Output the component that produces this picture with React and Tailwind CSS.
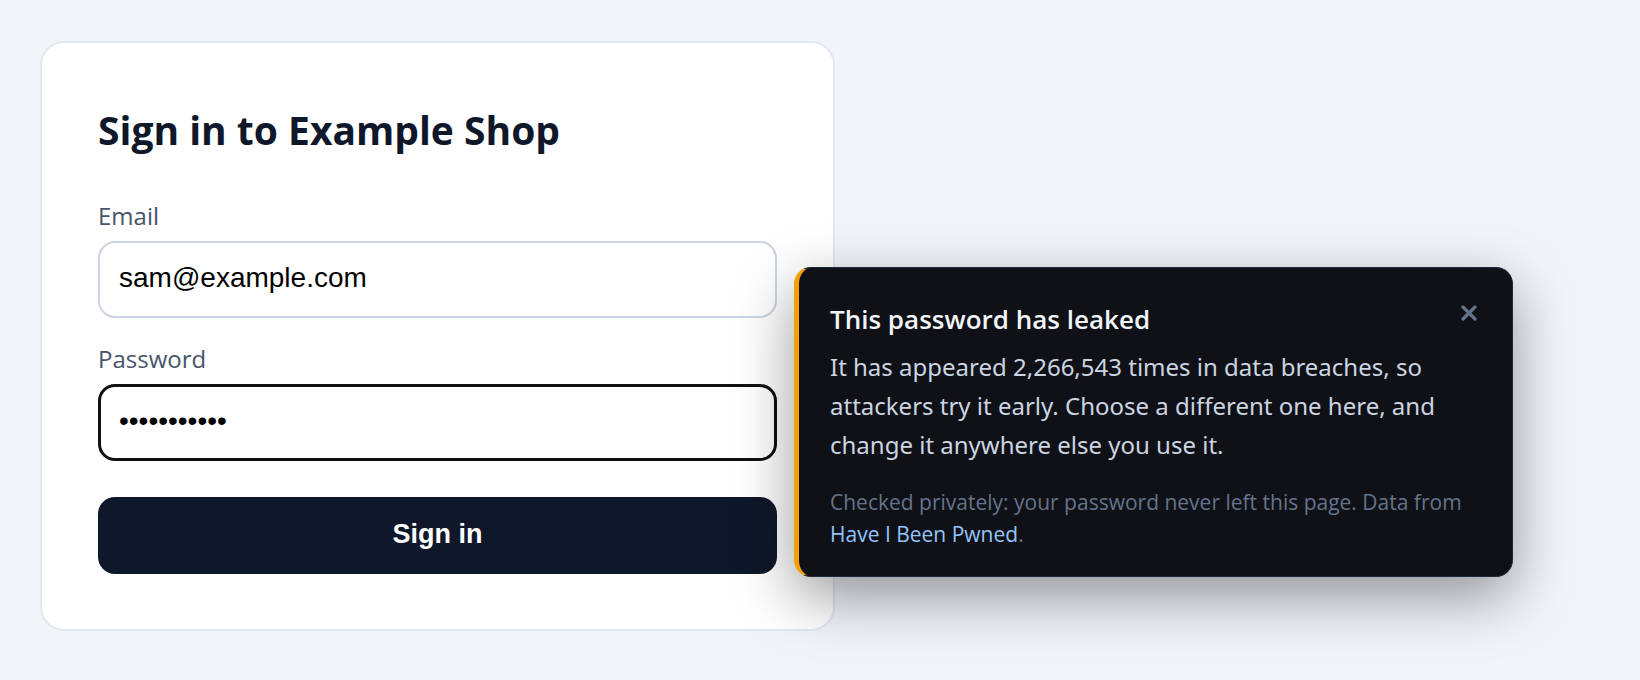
import React, { useState } from 'react';

// ── LeakNotice ────────────────────────────────────────────────────────────────

/**
 * Dark popover that sits beside the password field and warns that the
 * password shows up in known breaches.
 */
function LeakNotice({ count, onDismiss }) {
  return (
    <div
      role="alert"
      className="absolute left-full -top-[117px] ml-[17px] w-[719px] rounded-[17px] border border-l-5 border-[#1e293b] border-l-[#f59e0b] bg-[#0f1117] pl-[31px] pr-8 pt-8 pb-[26px] shadow-[0_20px_60px_rgba(0,0,0,0.4)]"
    >
      <div className="flex items-start justify-between">
        <h2 className="text-[26px] leading-[38px] font-semibold text-[#f1f5f9]">
          This password has leaked
        </h2>
        <button
          type="button"
          aria-label="Dismiss"
          onClick={onDismiss}
          className="flex h-[26px] w-[22px] items-center justify-center text-[#64748b]"
        >
          <svg viewBox="0 0 16 16" className="size-4" fill="none" stroke="currentColor" strokeWidth="3.2" strokeLinecap="round" aria-hidden="true">
            <path d="M2 2l12 12M14 2L2 14" />
          </svg>
        </button>
      </div>

      <p className="mt-[9px] font-['Noto_Sans',sans-serif] text-[24px] leading-[39px] text-[#cbd5e1]">
        {`It has appeared ${count.toLocaleString('en-US')} times in data breaches, so attackers try it early. Choose a different one here, and change it anywhere else you use it.`}
      </p>

      <p className="mt-[22px] text-[21px] leading-8 text-[#64748b]">
        Checked privately: your password never left this page. Data from{' '}
        <a href="#hibp" className="text-[#93c5fd]">Have I Been Pwned</a>.
      </p>
    </div>
  );
}

// ── App ───────────────────────────────────────────────────────────────────────

export default function App() {
  const [email, setEmail] = useState('sam@example.com');
  const [password, setPassword] = useState('password123');
  const [showNotice, setShowNotice] = useState(true);

  return (
    <main className="min-h-screen overflow-hidden bg-[#f1f5f9] px-10 py-[41px] font-['Open_Sans','Noto_Sans',sans-serif]">
      <form
        onSubmit={(e) => e.preventDefault()}
        className="flex w-full max-w-[795px] flex-col rounded-3xl border-2 border-[#e2e8f0] bg-white px-14 py-[55px]"
      >
        <h1 className="mb-9 text-[39px] leading-[64px] font-bold text-[#0f172a]">
          Sign in to Example Shop
        </h1>

        <label htmlFor="email" className="mb-2 text-[24px] leading-[35px] text-[#475569]">
          Email
        </label>
        <input
          id="email"
          type="email"
          value={email}
          onChange={(e) => setEmail(e.target.value)}
          className="mb-[23px] h-[77px] w-full rounded-[17px] border-2 border-[#cbd5e1] px-[19px] pb-[3px] font-['Liberation_Sans',sans-serif] text-[28px] text-black outline-none"
        />

        <label htmlFor="password" className="mb-2 text-[24px] leading-[35px] text-[#475569]">
          Password
        </label>
        <div className="relative mb-9">
          <input
            id="password"
            type="password"
            value={password}
            onChange={(e) => setPassword(e.target.value)}
            className="block h-[77px] w-full rounded-[17px] border-3 border-[#101010] bg-white px-[18px] pb-[3px] font-['Liberation_Sans',sans-serif] text-[28px] text-black outline-none"
          />
          {showNotice && <LeakNotice count={2266543} onDismiss={() => setShowNotice(false)} />}
        </div>

        <button
          type="submit"
          className="h-[77px] rounded-[17px] bg-[#0f172a] pb-[3px] font-['Liberation_Sans',sans-serif] text-[27px] font-bold text-white"
        >
          Sign in
        </button>
      </form>
    </main>
  );
}
